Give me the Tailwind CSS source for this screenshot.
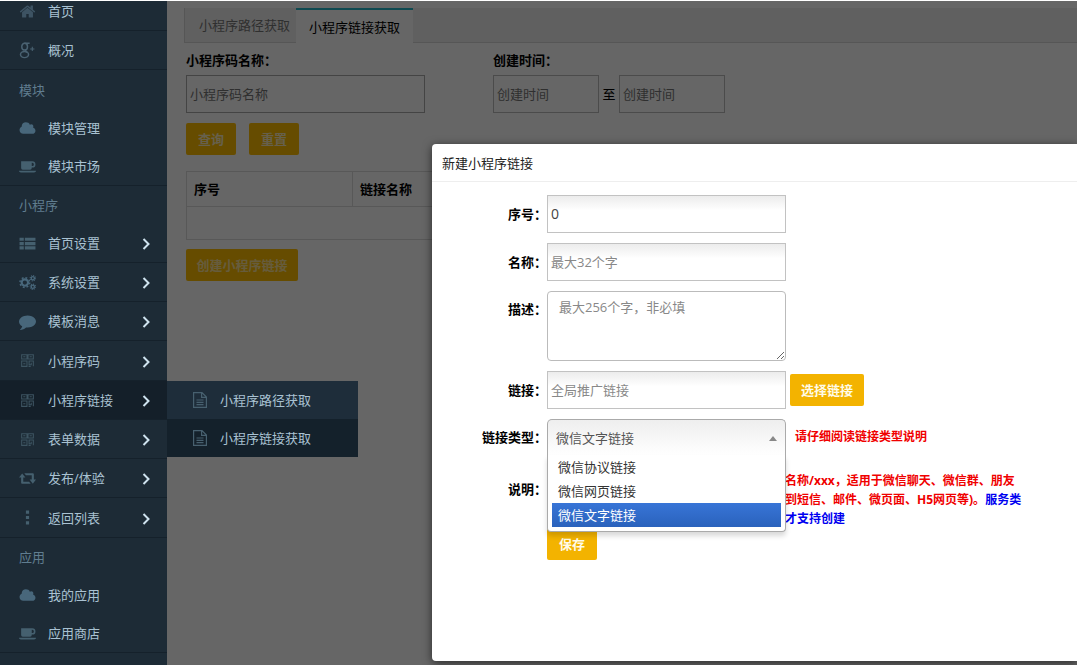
<!DOCTYPE html>
<html lang="zh-CN">
<head>
<meta charset="utf-8">
<title>新建小程序链接</title>
<script src="https://cdn.jsdelivr.net/npm/@tailwindcss/browser@4"></script>
</head>
<body class="relative min-h-screen overflow-hidden bg-white font-['Open_Sans','Noto_Sans_CJK_SC',sans-serif] text-[13px] leading-5 text-black">

<svg class="hidden" aria-hidden="true">
  <symbol id="home" viewBox="0 0 1792 1792"><path fill="currentColor" d="M1472 992v480q0 26-19 45t-45 19h-384v-384h-256v384h-384q-26 0-45-19t-19-45v-480q0-1 .5-3t.5-3l575-474 575 474q1 2 1 6zm223-69l-62 74q-8 9-21 11h-3q-13 0-21-7l-692-577-692 577q-12 8-24 7-13-2-21-11l-62-74q-8-10-7-23.5t11-21.5l719-599q32-26 76-26t76 26l244 204v-195q0-14 9-23t23-9h192q14 0 23 9t9 23v408l219 182q10 8 11 21.5t-7 23.5z"/></symbol>
  <symbol id="gplus" viewBox="0 0 16 16"><g fill="none" stroke="currentColor" stroke-width="1.400"><ellipse cx="5.300" cy="4.400" rx="2.700" ry="3.200"/><path d="M5 1.200h5M6.500 7.400c-1.400 1 .2 1.600 1.200 2.300"/><ellipse cx="5.200" cy="11.800" rx="3.800" ry="2.900"/><path stroke-width="1" d="M10.500 6.500h4M12.500 4.500v4"/></g></symbol>
  <symbol id="cloud" viewBox="0 0 2048 1792"><path fill="currentColor" d="M1984 1152q0 159-112.500 271.500t-271.500 112.500h-1088q-185 0-316.500-131.500t-131.500-316.500q0-132 71-241.500t187-163.500q-2-28-2-43 0-212 150-362t362-150q158 0 286.500 88t187.500 230q70-62 166-62 106 0 181 75t75 181q0 75-41 138 129 30 213 134.500t84 239.500z"/></symbol>
  <symbol id="coffee" viewBox="0 0 16 16"><path fill="currentColor" fill-rule="evenodd" d="M2 3h10.500a3 3 0 0 1 0 6H12v.5A1.500 1.500 0 0 1 10.500 11h-7A1.500 1.500 0 0 1 2 9.500zM12 4.500v3h.5a1.500 1.500 0 0 0 0-3zM0 12h16c0 1-.8 1.600-1.800 1.600H1.800C.8 13.600 0 13 0 12z"/></symbol>
  <symbol id="list" viewBox="0 0 16 16"><path fill="currentColor" d="M.5 2.500h4v3h-4zM5.500 2.500h10v3h-10zM.5 6.600h4v3h-4zM5.500 6.600h10v3h-10zM.5 10.700h4v3h-4zM5.500 10.700h10v3h-10z"/></symbol>
  <symbol id="cogs" viewBox="0 0 16 16"><g fill="none" stroke="currentColor"><circle cx="5.500" cy="8" r="3" stroke-width="2"/><circle cx="5.500" cy="8" r="4.600" stroke-width="1.400" stroke-dasharray="1.800 1.810"/><circle cx="13" cy="4" r="1.500" stroke-width="1.300"/><circle cx="13" cy="4" r="2.500" stroke-width="1" stroke-dasharray="1 .96"/><circle cx="13" cy="12" r="1.500" stroke-width="1.300"/><circle cx="13" cy="12" r="2.500" stroke-width="1" stroke-dasharray="1 .96"/></g></symbol>
  <symbol id="comment" viewBox="0 0 1792 1792"><path fill="currentColor" d="M1792 896q0 174-120 321.500t-326 233-450 85.500q-70 0-145-8-198 175-460 242-49 14-114 22-17 2-30.500-9t-17.500-29v-1q-3-4-.5-12t2-10 4.500-9.500l6-9 7-8.500 8-9q7-8 31-34.500t34.500-38 31-39.500 32.500-51 27-59 26-76q-157-89-247.500-220t-90.500-281q0-130 71-248.500t191-204.500 286-136.500 348-50.500q244 0 450 85.500t326 233 120 321.500z"/></symbol>
  <symbol id="qrcode" viewBox="0 0 16 16"><path fill="none" stroke="currentColor" d="M2.500 2.500h5v4h-5zM8.500 2.500h5v4h-5zM2.500 8.500h5v5h-5zM4 4.500h2M10 4.500h2M4 11h2M9 8.500h4.500v5M9.500 9v3h2v-2M9 13.500h2"/></symbol>
  <symbol id="retweet" viewBox="0 0 16 16"><path fill="currentColor" d="M3 3.200L6 7H4v4h5.500l1.500 2H3.200C2.500 13 2 12.600 2 12V7H0zM13 13l3-4h-2V4.200C14 3.500 13.500 3 12.800 3H5l1.500 2H12v4h-2z"/></symbol>
  <symbol id="dots" viewBox="0 0 16 16"><path fill="currentColor" d="M6.500 1.500h3v3h-3zM6.500 6.500h3v3h-3zM6.500 11.500h3v3h-3z"/></symbol>
  <symbol id="file" viewBox="0 0 16 16"><path fill="none" stroke="currentColor" stroke-width="1.200" d="M1.600 .6h8.400l4.400 4.400v10.400H1.600zM9.600 .6v4.800h4.800M4.500 8h7M4.500 10.300h7M4.500 12.600h7"/></symbol>
  <symbol id="chevron" viewBox="0 0 8 12"><path fill="none" stroke="currentColor" stroke-width="2" d="M1.500 1l5 5-5 5"/></symbol>
</svg>

<main class="ml-[167px] pl-[17px]">
  <div role="tablist" class="mt-2 flex h-[35px] border-b border-l border-[#d8d8d8] bg-[#f0f0f0]">
    <button role="tab" class="w-[111px] pl-2 text-[#777]">小程序路径获取</button>
    <button role="tab" aria-selected="true" class="h-[35px] w-[117px] border-t-2 border-[#23b7c8] bg-white">小程序链接获取</button>
  </div>

  <form class="pl-[2px]">
    <div class="mt-[7px] flex">
      <div class="w-[307px]">
        <label for="code-name" class="block h-[25px] font-bold">小程序码名称：</label>
        <input id="code-name" placeholder="小程序码名称" class="h-[38px] w-[239px] border border-[#aaa] px-[3px] pb-px placeholder:text-[#777]">
      </div>
      <div>
        <label for="date-from" class="block h-[25px] font-bold">创建时间：</label>
        <div class="flex items-center">
          <input id="date-from" placeholder="创建时间" class="h-[38px] w-[106px] border border-[#bbb] px-[3px] pb-px placeholder:text-[#777]">
          <label for="date-to" class="w-5 text-center">至</label>
          <input id="date-to" placeholder="创建时间" class="h-[38px] w-[106px] border border-[#bbb] px-[3px] pb-px placeholder:text-[#777]">
        </div>
      </div>
    </div>
    <div class="mt-[10px] flex gap-[13px]">
      <button type="button" class="h-8 w-[50px] rounded-xs bg-[#ffbe00] font-bold text-[#fff0c0]">查询</button>
      <button type="button" class="h-8 w-[50px] rounded-xs bg-[#ffbe00] font-bold text-[#fff0c0]">重置</button>
    </div>
    <table class="mt-4 w-full table-fixed border-collapse border border-[#ddd]">
      <thead>
        <tr class="h-[35px] border-b border-[#ddd] text-left">
          <th class="w-[166px] border-r border-[#ddd] px-[7px] pb-px">序号</th>
          <th class="px-[7px] pb-px">链接名称</th>
        </tr>
      </thead>
      <tbody><tr class="h-[33px]"><td colspan="2"></td></tr></tbody>
    </table>
    <button type="button" class="mt-[9px] h-8 w-[112px] rounded-xs bg-[#ffbe00] font-bold text-[#ffe69a]">创建小程序链接</button>
  </form>
</main>

<div class="absolute inset-x-0 top-px bottom-0 bg-black/60"></div>

<aside class="absolute top-px bottom-0 left-0 w-[167px] bg-[#1d2b36] text-[#a9c2d2]">
  <nav class="-mt-[9px]">
    <a href="#" class="flex h-[39px] items-center border-b border-[#15212b] pl-[19px]"><svg class="mr-3 size-[17px] text-[#3d5363]"><use href="#home"/></svg>首页</a>
    <a href="#" class="flex h-[39px] items-center border-b border-[#15212b] pl-[19px]"><svg class="mr-3 size-[17px] text-[#4a6272]"><use href="#gplus"/></svg>概况</a>
    <h2 class="flex h-[39px] items-center pl-[19px] text-[#607d8f]">模块</h2>
    <a href="#" class="flex h-[38px] items-center pl-[19px]"><svg class="mr-3 size-[17px] text-[#48677b]"><use href="#cloud"/></svg>模块管理</a>
    <a href="#" class="flex h-[39px] items-center border-b border-[#15212b] pl-[19px]"><svg class="mr-3 size-[17px] text-[#45606f]"><use href="#coffee"/></svg>模块市场</a>
    <h2 class="flex h-[38px] items-center pl-[19px] text-[#607d8f]">小程序</h2>
    <a href="#" class="flex h-[39px] items-center border-b border-[#15212b] pr-4 pl-[19px]"><svg class="mr-3 size-[17px] text-[#45606f]"><use href="#list"/></svg>首页设置<svg class="mt-[2px] ml-auto h-3 w-[10px] text-[#cfe3ef]"><use href="#chevron"/></svg></a>
    <a href="#" class="flex h-[39px] items-center border-b border-[#15212b] pr-4 pl-[19px]"><svg class="mr-3 size-[17px] text-[#48677b]"><use href="#cogs"/></svg>系统设置<svg class="mt-[2px] ml-auto h-3 w-[10px] text-[#cfe3ef]"><use href="#chevron"/></svg></a>
    <a href="#" class="flex h-[39px] items-center border-b border-[#15212b] pr-4 pl-[19px]"><svg class="mr-3 size-[17px] text-[#48677b]"><use href="#comment"/></svg>模板消息<svg class="mt-[2px] ml-auto h-3 w-[10px] text-[#cfe3ef]"><use href="#chevron"/></svg></a>
    <a href="#" class="flex h-[40px] items-center border-b border-[#15212b] pr-4 pl-[19px]"><svg class="mr-3 size-[17px] text-[#3d5461]"><use href="#qrcode"/></svg>小程序码<svg class="mt-[2px] ml-auto h-3 w-[10px] text-[#cfe3ef]"><use href="#chevron"/></svg></a>
    <div class="relative">
      <a href="#" class="flex h-[39px] items-center border-b border-[#15212b] bg-[#141f29] pr-4 pl-[19px]"><svg class="mr-3 size-[17px] text-[#3d5461]"><use href="#qrcode"/></svg>小程序链接<svg class="mt-[2px] ml-auto h-3 w-[10px] text-[#cfe3ef]"><use href="#chevron"/></svg></a>
      <div class="absolute top-0 left-full w-[191px] bg-[#1e2d3a]">
        <a href="#" class="flex h-[38px] items-center pl-[25px]"><svg class="mr-3 size-4 text-[#47606f]"><use href="#file"/></svg>小程序路径获取</a>
        <a href="#" class="flex h-[38px] items-center bg-[#14212b] pl-[25px]"><svg class="mr-3 size-4 text-[#47606f]"><use href="#file"/></svg>小程序链接获取</a>
      </div>
    </div>
    <a href="#" class="flex h-[39px] items-center border-b border-[#15212b] pr-4 pl-[19px]"><svg class="mr-3 size-[17px] text-[#3d5461]"><use href="#qrcode"/></svg>表单数据<svg class="mt-[2px] ml-auto h-3 w-[10px] text-[#cfe3ef]"><use href="#chevron"/></svg></a>
    <a href="#" class="flex h-[39px] items-center border-b border-[#15212b] pr-4 pl-[19px]"><svg class="mr-3 size-[17px] text-[#45606f]"><use href="#retweet"/></svg>发布/体验<svg class="mt-[2px] ml-auto h-3 w-[10px] text-[#cfe3ef]"><use href="#chevron"/></svg></a>
    <a href="#" class="flex h-[40px] items-center border-b border-[#15212b] pr-4 pl-[19px]"><svg class="mr-3 size-[17px] text-[#45606f]"><use href="#dots"/></svg>返回列表<svg class="mt-[2px] ml-auto h-3 w-[10px] text-[#cfe3ef]"><use href="#chevron"/></svg></a>
    <h2 class="flex h-[38px] items-center pl-[19px] text-[#607d8f]">应用</h2>
    <a href="#" class="flex h-[38px] items-center pl-[19px]"><svg class="mr-3 size-[17px] text-[#48677b]"><use href="#cloud"/></svg>我的应用</a>
    <a href="#" class="flex h-[39px] items-center border-b border-[#15212b] pl-[19px]"><svg class="mr-3 size-[17px] text-[#45606f]"><use href="#coffee"/></svg>应用商店</a>
  </nav>
</aside>

<section role="dialog" aria-labelledby="dialog-title" class="absolute top-36 right-0 left-[432px] rounded-l-[4px] bg-white shadow-[0_2px_10px_rgba(0,0,0,0.6)]">
  <h1 id="dialog-title" class="flex h-[38px] items-center border-b border-[#eee] pl-[10px] text-[#222]">新建小程序链接</h1>
  <form class="grid grid-cols-[115px_1fr] gap-y-[10px] pt-[13px] pb-[101px]">
    <label for="order" class="self-center text-right font-bold">序号：</label>
    <div class="flex"><input id="order" value="0" class="h-[38px] w-[239px] border border-[#c2c2c2] bg-linear-to-b from-[#ececec] to-white to-40% px-[3px] pb-px text-sm text-[#444]"></div>

    <label for="name" class="self-center text-right font-bold">名称：</label>
    <div class="flex"><input id="name" placeholder="最大32个字" class="h-[38px] w-[239px] border border-[#c2c2c2] bg-linear-to-b from-[#ececec] to-white to-40% px-[3px] pb-px placeholder:text-[#888]"></div>

    <label for="desc" class="pt-2 text-right font-bold">描述：</label>
    <div class="flex"><textarea id="desc" placeholder="最大256个字，非必填" class="h-[70px] w-[239px] rounded-[4px] border border-[#bbb] px-[11px] py-[5px] placeholder:text-[#888]"></textarea></div>

    <label for="link" class="self-center text-right font-bold">链接：</label>
    <div class="flex items-center gap-1">
      <input id="link" placeholder="全局推广链接" class="h-[38px] w-[239px] border border-[#c2c2c2] bg-linear-to-b from-[#ececec] to-white to-40% px-[3px] pb-px placeholder:text-[#888]">
      <button type="button" class="h-8 w-[74px] rounded-xs bg-[#f3b300] font-bold text-[#fffbe8]">选择链接</button>
    </div>

    <label for="link-type" class="self-center text-right font-bold">链接类型：</label>
    <div class="flex items-center">
      <div class="relative h-9 w-[239px] rounded-t-[5px] border border-b-0 border-[#aaa] bg-linear-to-b from-[#eee] to-white">
        <select id="link-type" class="size-full appearance-none bg-transparent pl-2 text-[#555]">
          <option>微信文字链接</option>
          <option>微信协议链接</option>
          <option>微信网页链接</option>
        </select>
        <svg class="pointer-events-none absolute top-4 right-2 h-[5px] w-2" viewBox="0 0 8 5"><path fill="#888" d="M4 0l4 5H0z"/></svg>
        <ul role="listbox" aria-label="链接类型" class="absolute top-full -right-px -left-px z-10 rounded-b-[4px] border border-t-0 border-[#aaa] bg-white px-1 pb-1 leading-6 text-[#333] shadow-[0_4px_5px_rgba(0,0,0,0.15)]">
          <li role="option" class="px-[6px]">微信协议链接</li>
          <li role="option" class="px-[6px]">微信网页链接</li>
          <li role="option" aria-selected="true" class="bg-linear-to-b from-[#3875d7] to-[#2a62bc] px-[6px] text-white">微信文字链接</li>
        </ul>
      </div>
      <p class="ml-[9px] text-xs font-bold text-[#f00000]">请仔细阅读链接类型说明</p>
    </div>

    <div class="pt-[14px] text-right font-bold">说明：</div>
    <div class="pt-[6px]">
      <p class="pl-[238px] text-xs leading-[19px] font-bold whitespace-nowrap text-[#f00000]">名称/xxx，适用于微信聊天、微信群、朋友<br>到短信、邮件、微页面、H5网页等)。<span class="text-[#0000f0]">服务类<br>才支持创建</span></p>
      <button class="h-8 w-[50px] rounded-xs bg-[#f3b300] font-bold text-[#fffbe8]">保存</button>
    </div>
  </form>
</section>
</body>
</html>
